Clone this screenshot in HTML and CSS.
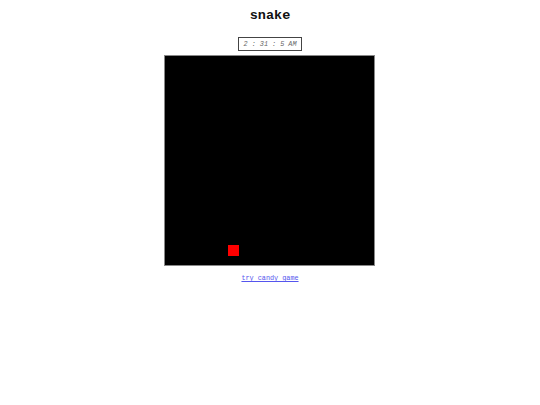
FILE: index.html
```html
<!DOCTYPE html>
<html>
<head>
<meta charset="utf-8">
<link rel="stylesheet" href="styles.css">
</head>
<body>
<div class="page">
  <h1 class="title">snake</h1>
  <div class="clock">2 : 31 : 5 AM</div>
  <div class="board">
    <div class="food"></div>
  </div>
  <a class="link" href="#">try candy game</a>
</div>
</body>
</html>
```
FILE: styles.css
```css
html, body {
  margin: 0;
  padding: 0;
  background: #fff;
}
.page {
  display: flex;
  flex-direction: column;
  align-items: center;
  font-family: "Courier New", Courier, "Nimbus Mono PS", FreeMono, "Liberation Mono", monospace;
}
.title {
  margin: 8px 0 0 0;
  font-size: 13.5px;
  line-height: 16px;
  font-weight: bold;
  color: #111;
}
.clock {
  margin-top: 13px;
  border: 1px solid #444;
  height: 12px;
  line-height: 12px;
  padding: 0 4px;
  font-size: 6.8px;
  font-style: italic;
  color: #666;
}
.board {
  position: relative;
  margin: 4px 1px 0 0;
  width: 209px;
  height: 209px;
  border: 1px solid #888;
  background: #000;
}
.food {
  position: absolute;
  left: 63px;
  top: 189px;
  width: 10.5px;
  height: 10.5px;
  background: #f00;
}
.link {
  margin-top: 7px;
  font-size: 6.8px;
  line-height: 10px;
  color: #5555ee;
  text-decoration: underline;
}
```
